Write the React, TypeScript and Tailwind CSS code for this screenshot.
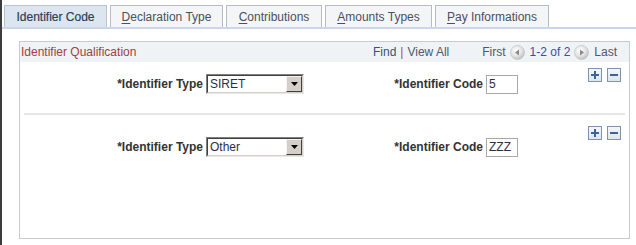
import React from "react";

const font = { fontFamily: '"Liberation Sans", Arial, sans-serif' };

function Tab({ label, u, rest, width, active }: { label?: string; u?: string; rest?: string; width: number; active?: boolean }) {
  return (
    <div
      className={
        "h-[22px] flex items-center justify-center border border-b-0 text-[12px] leading-none " +
        (active
          ? "bg-[#dde6f0] border-[#b7c3d3] text-[#2f3d55]"
          : "bg-[#f4f5f7] border-[#b4bccb] text-[#4a5060]")
      }
      style={{ width }}
    >
      {active ? (
        <span className="[-webkit-text-stroke:0.2px_#2f3d55]">{label}</span>
      ) : (
        <span>
          <span className="underline underline-offset-2">{u}</span>
          {rest}
        </span>
      )}
    </div>
  );
}

function CircleArrow({ dir }: { dir: "left" | "right" }) {
  return (
    <svg width="15" height="15" viewBox="0 0 15 15">
      <defs>
        <radialGradient id={"g" + dir} cx="40%" cy="35%" r="70%">
          <stop offset="0%" stopColor="#ffffff" />
          <stop offset="60%" stopColor="#e2e2e2" />
          <stop offset="100%" stopColor="#b8b8b8" />
        </radialGradient>
      </defs>
      <circle cx="7.5" cy="7.5" r="7" fill={"url(#g" + dir + ")"} stroke="#c4c4c4" strokeWidth="0.8" />
      {dir === "left" ? (
        <polygon points="5,7.5 9,4.5 9,10.5" fill="#8a8a8a" />
      ) : (
        <polygon points="10,7.5 6,4.5 6,10.5" fill="#8a8a8a" />
      )}
    </svg>
  );
}

function PMButton({ plus }: { plus?: boolean }) {
  return (
    <div className="w-[14px] h-[14px] border border-[#7f93ad] bg-gradient-to-b from-[#f4f7fa] to-[#dfe6ee] flex items-center justify-center">
      <svg width="10" height="10" viewBox="0 0 10 10">
        <rect x="1" y="4" width="8" height="2" fill="#3a6599" />
        {plus && <rect x="4" y="1" width="2" height="8" fill="#3a6599" />}
      </svg>
    </div>
  );
}

function Select({ value }: { value: string }) {
  return (
    <div className="w-[98px] h-[20px] border border-t-[#808080] border-l-[#808080] border-b-[#e8e8e8] border-r-[#e8e8e8] flex">
      <div className="flex-1 flex border border-t-[#404040] border-l-[#404040] border-b-[#d4d0c8] border-r-[#d4d0c8] bg-white">
        <div className="flex-1 pl-[2px] text-[12px] leading-[16px] text-[#2d2d4a]">{value}</div>
        <div className="w-[16px] h-[16px] bg-[#d4d0c8] border border-t-[#f4f4f4] border-l-[#f4f4f4] border-b-[#404040] border-r-[#404040] flex items-center justify-center">
          <svg width="7" height="4" viewBox="0 0 7 4">
            <polygon points="0,0 7,0 3.5,4" fill="#000" />
          </svg>
        </div>
      </div>
    </div>
  );
}

function Input({ value }: { value: string }) {
  return (
    <div className="w-[32px] h-[19px] border border-[#a8a8a8] bg-white text-[12px] leading-[17px] pl-[2px] text-[#2d2d4a]">
      {value}
    </div>
  );
}

function Row({ type, code, btnTop, fieldTop, height }: { type: string; code: string; btnTop: number; fieldTop: number; height: number }) {
  return (
    <div className="flex" style={{ height }}>
      <div className="flex items-center" style={{ marginTop: fieldTop, height: 20 }}>
        <div className="w-[284px] flex items-center justify-end gap-[3px]">
          <span className="font-bold text-[12px] text-[#333]">*Identifier Type</span>
          <Select value={type} />
        </div>
        <div className="w-[214px] flex items-center justify-end gap-[3px]">
          <span className="font-bold text-[12px] text-[#333]">*Identifier Code</span>
          <Input value={code} />
        </div>
      </div>
      <div className="flex-1" />
      <div className="flex gap-[5px] pr-[8px]" style={{ marginTop: btnTop }}>
        <PMButton plus />
        <PMButton />
      </div>
    </div>
  );
}

export default function App() {
  return (
    <div className="w-[636px] h-[245px] bg-white flex overflow-hidden" style={font}>
      <div className="w-[2px] bg-[#3c3c3c]" />
      <div className="flex-1 flex flex-col">
        <div className="flex gap-[3px] pl-[2px] pt-[5px] items-end">
          <Tab active label="Identifier Code" width={103} />
          <Tab u="D" rest="eclaration Type" width={113} />
          <Tab u="C" rest="ontributions" width={96} />
          <Tab u="A" rest="mounts Types" width={107} />
          <Tab u="P" rest="ay Informations" width={114} />
        </div>
        <div className="h-[2px] bg-[#c9d7e9]" />
        <div className="ml-[17px] mt-[12px] w-[611px] h-[198px] border border-[#c8ccd1] flex flex-col">
          <div className="h-[20px] bg-[#f0f3f5] flex items-center text-[12px]">
            <span className="pl-[1px] text-[#a2403c]">Identifier Qualification</span>
            <div className="flex-1" />
            <span className="text-[#3d4f7d]">Find</span>
            <span className="text-[#b0407a] px-[4px]">|</span>
            <span className="text-[#4d5873]">View All</span>
            <span className="text-[#4d5873] ml-[33px]">First</span>
            <span className="ml-[4px] flex"><CircleArrow dir="left" /></span>
            <span className="text-[#3d4f9a] ml-[5px]">1-2 of 2</span>
            <span className="ml-[4px] flex"><CircleArrow dir="right" /></span>
            <span className="text-[#4d5873] ml-[5px] mr-[12px]">Last</span>
          </div>
          <Row type="SIRET" code="5" btnTop={6} fieldTop={12} height={51} />
          <div className="mx-[4px] h-[2px] bg-[#e6e6e6]" />
          <Row type="Other" code="ZZZ" btnTop={11} fieldTop={22} height={50} />
        </div>
      </div>
    </div>
  );
}
